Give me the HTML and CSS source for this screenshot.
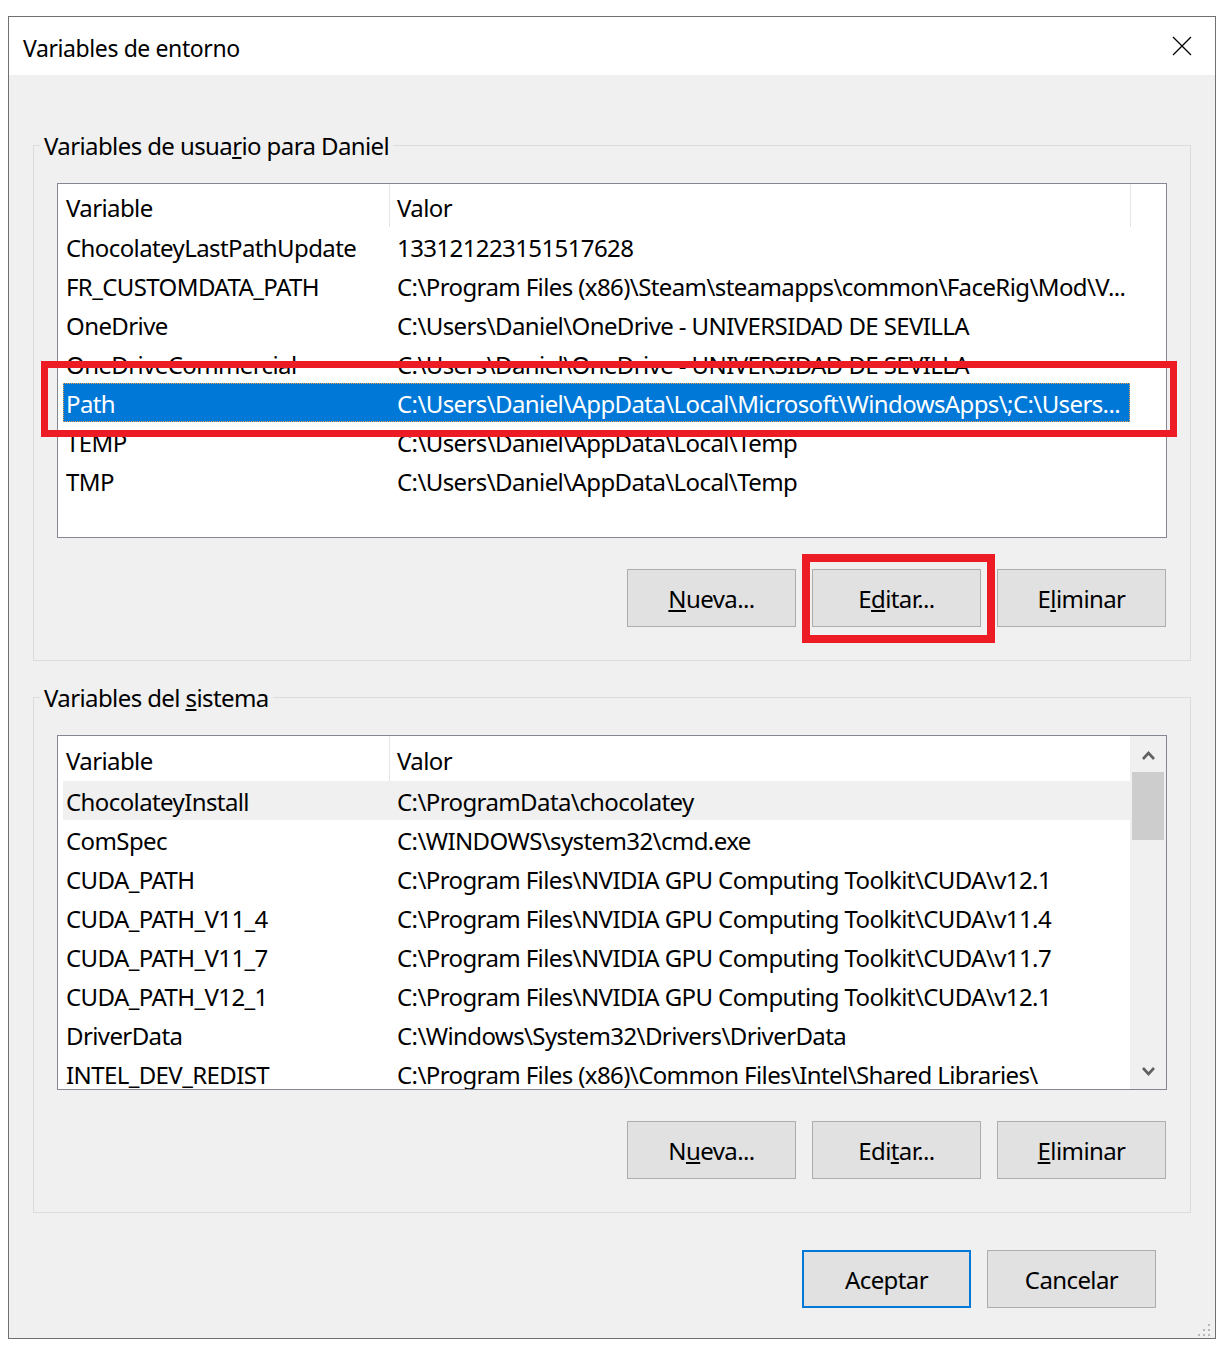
FILE: index.html
```html
<!DOCTYPE html>
<html lang="es">

<head>
    <meta charset="UTF-8">
    <meta name="viewport" content="width=device-width, initial-scale=1.0">
    <title>Variables de entorno</title>
    <link rel="stylesheet" href="styles.css">
</head>

<body>
    <div class="window">
        <div class="titlebar">
            <span class="title">Variables de entorno</span>
            <svg class="close" width="20" height="20" viewBox="0 0 20 20">
                <path d="M1 1 L19 19 M19 1 L1 19" stroke="#000" stroke-width="1.3" fill="none" />
            </svg>
        </div>

        <div class="content">
            <!-- Variables del usuario -->
            <fieldset class="group">
                <legend>Variables de usua<u>r</u>io para Daniel</legend>
                <div class="group-body">
                    <div class="listview">
                        <div class="columns">
                            <div class="lv-header">
                                <div class="hcell col-var">Variable</div>
                                <div class="hcell col-val">Valor</div>
                            </div>
                            <div class="row"><span>ChocolateyLastPathUpdate</span><span>133121223151517628</span></div>
                            <div class="row"><span>FR_CUSTOMDATA_PATH</span><span>C:\Program Files (x86)\Steam\steamapps\common\FaceRig\Mod\V...</span></div>
                            <div class="row"><span>OneDrive</span><span>C:\Users\Daniel\OneDrive - UNIVERSIDAD DE SEVILLA</span></div>
                            <div class="row"><span>OneDriveCommercial</span><span>C:\Users\Daniel\OneDrive - UNIVERSIDAD DE SEVILLA</span></div>
                            <div class="row selected">
                                <span>Path</span><span>C:\Users\Daniel\AppData\Local\Microsoft\WindowsApps\;C:\Users...</span>
                                <div class="mark mark-row"></div>
                            </div>
                            <div class="row"><span>TEMP</span><span>C:\Users\Daniel\AppData\Local\Temp</span></div>
                            <div class="row"><span>TMP</span><span>C:\Users\Daniel\AppData\Local\Temp</span></div>
                        </div>
                    </div>

                    <div class="actions">
                        <button class="btn"><u>N</u>ueva...</button>
                        <button class="btn">E<u>d</u>itar...<span class="mark mark-btn"></span></button>
                        <button class="btn">E<u>l</u>iminar</button>
                    </div>
                </div>
            </fieldset>

            <!-- Variables del sistema -->
            <fieldset class="group">
                <legend>Variables del <u>s</u>istema</legend>
                <div class="group-body">
                    <div class="listview">
                        <div class="columns clipped">
                            <div class="lv-header tall">
                                <div class="hcell col-var">Variable</div>
                                <div class="hcell col-val">Valor</div>
                            </div>
                            <div class="row hover"><span>ChocolateyInstall</span><span>C:\ProgramData\chocolatey</span></div>
                            <div class="row"><span>ComSpec</span><span>C:\WINDOWS\system32\cmd.exe</span></div>
                            <div class="row"><span>CUDA_PATH</span><span>C:\Program Files\NVIDIA GPU Computing Toolkit\CUDA\v12.1</span></div>
                            <div class="row"><span>CUDA_PATH_V11_4</span><span>C:\Program Files\NVIDIA GPU Computing Toolkit\CUDA\v11.4</span></div>
                            <div class="row"><span>CUDA_PATH_V11_7</span><span>C:\Program Files\NVIDIA GPU Computing Toolkit\CUDA\v11.7</span></div>
                            <div class="row"><span>CUDA_PATH_V12_1</span><span>C:\Program Files\NVIDIA GPU Computing Toolkit\CUDA\v12.1</span></div>
                            <div class="row"><span>DriverData</span><span>C:\Windows\System32\Drivers\DriverData</span></div>
                            <div class="row"><span>INTEL_DEV_REDIST</span><span>C:\Program Files (x86)\Common Files\Intel\Shared Libraries\</span></div>
                        </div>
                        <div class="scrollbar">
                            <div class="sb-btn">
                                <svg width="15" height="11" viewBox="0 0 15 11">
                                    <path d="M2 9 L7.5 3 L13 9" stroke="#606060" stroke-width="2.6" fill="none" />
                                </svg>
                            </div>
                            <div class="sb-thumb"></div>
                            <div class="sb-track"></div>
                            <div class="sb-btn">
                                <svg width="15" height="11" viewBox="0 0 15 11">
                                    <path d="M2 2 L7.5 8 L13 2" stroke="#606060" stroke-width="2.6" fill="none" />
                                </svg>
                            </div>
                        </div>
                    </div>

                    <div class="actions">
                        <button class="btn">N<u>u</u>eva...</button>
                        <button class="btn">Edi<u>t</u>ar...</button>
                        <button class="btn"><u>E</u>liminar</button>
                    </div>
                </div>
            </fieldset>

            <div class="footer">
                <button class="btn default">Aceptar</button>
                <button class="btn">Cancelar</button>
            </div>
        </div>

        <!-- agarre de redimensionado -->
        <svg class="grip" width="14" height="14" viewBox="0 0 14 14">
            <rect x="11" y="1" width="2" height="2" fill="#b8b8b8" />
            <rect x="6" y="6" width="2" height="2" fill="#b8b8b8" />
            <rect x="11" y="6" width="2" height="2" fill="#b8b8b8" />
            <rect x="1" y="11" width="2" height="2" fill="#b8b8b8" />
            <rect x="6" y="11" width="2" height="2" fill="#b8b8b8" />
            <rect x="11" y="11" width="2" height="2" fill="#b8b8b8" />
        </svg>
    </div>
</body>

</html>
```

FILE: styles.css
```css
body {
    margin: 0;
    background-color: #fff;
    font-family: "Noto Sans", "Open Sans", sans-serif;
    font-size: 24px;
    letter-spacing: -0.6px;
    color: #000;
}

.window {
    position: relative;
    box-sizing: border-box;
    width: 1208px;
    height: 1323px;
    margin: 16px 0 0 8px;
    border: 1px solid #707070;
    background-color: #f0f0f0;
}

.titlebar {
    display: flex;
    align-items: center;
    justify-content: space-between;
    box-sizing: border-box;
    height: 58px;
    padding: 4px 23px 0 14px;
    background-color: #fff;
    font-size: 23px;
    letter-spacing: -0.4px;
}

.close {
    margin-top: -4px;
}

.content {
    padding: 0 24px;
}

/* cuadros de grupo */
.group {
    min-width: 0;
    margin: 55px 0 0;
    padding: 0;
    border: 1px solid #dcdcdc;
}

.group + .group {
    margin-top: 21px;
}

.group legend {
    margin-left: 6px;
    padding: 0 4px;
    line-height: 31px;
}

.group-body {
    padding: 22px 23px 33px;
}

/* lista de variables */
.listview {
    display: flex;
    box-sizing: border-box;
    height: 355px;
    border: 1px solid #828790;
    background-color: #fff;
}

.columns {
    flex: 1;
    min-width: 0;
}

.columns.clipped {
    overflow: hidden;
}

.lv-header {
    display: flex;
    height: 43px;
}

.lv-header.tall {
    height: 45px;
}

.hcell {
    box-sizing: border-box;
    height: 100%;
    padding: 4px 0 0 8px;
    line-height: 39px;
    border-right: 1px solid #e5e5e5;
    flex-shrink: 0;
}

.tall .hcell {
    padding-top: 5px;
}

.hcell.col-var {
    width: 332px;
}

.hcell.col-val {
    width: 741px;
    padding-left: 7px;
}

.row {
    position: relative;
    display: grid;
    grid-template-columns: 326px 741px;
    height: 39px;
    margin-left: 5px;
}

.row span {
    box-sizing: border-box;
    overflow: hidden;
    white-space: nowrap;
    padding: 3px 0 0 3px;
    line-height: 36px;
}

.row span + span {
    padding-left: 8px;
}

.row.selected {
    width: 1067px;
    background-color: #0078d7;
    color: #fff;
    outline: 1px dotted #f4a24a;
    outline-offset: -1px;
}

.row.hover {
    width: 1067px;
    background-color: #f0f0f0;
}

/* barra de desplazamiento */
.scrollbar {
    display: flex;
    flex-direction: column;
    width: 36px;
    background-color: #f0f0f0;
}

.sb-btn {
    display: flex;
    align-items: center;
    justify-content: center;
    height: 36px;
}

.sb-btn:first-child svg {
    margin-top: 3px;
}

.sb-thumb {
    height: 68px;
    margin: 0 2px;
    background-color: #cdcdcd;
}

.sb-track {
    flex: 1;
}

/* botones */
.actions,
.footer {
    display: flex;
    justify-content: flex-end;
    gap: 16px;
}

.actions {
    margin: 31px 1px 0 0;
}

.footer {
    margin: 37px 35px 0 0;
}

.btn {
    position: relative;
    box-sizing: border-box;
    width: 169px;
    height: 58px;
    padding: 0;
    border: 1px solid #adadad;
    background-color: #e1e1e1;
    font-family: inherit;
    font-size: 24px;
    letter-spacing: -0.6px;
    color: #000;
}

.btn.default {
    border: 2px solid #0078d7;
}

/* recuadros rojos de resaltado */
.mark {
    position: absolute;
    z-index: 2;
    box-sizing: border-box;
    pointer-events: none;
}

.mark-row {
    left: -22px;
    top: -22px;
    width: 1136px;
    height: 76px;
    border: 7px solid #ed1c24;
}

.mark-btn {
    left: -11px;
    top: -16px;
    width: 193px;
    height: 89px;
    border: 8px solid #ed1c24;
}

.grip {
    position: absolute;
    right: 4px;
    bottom: 1px;
}
```
